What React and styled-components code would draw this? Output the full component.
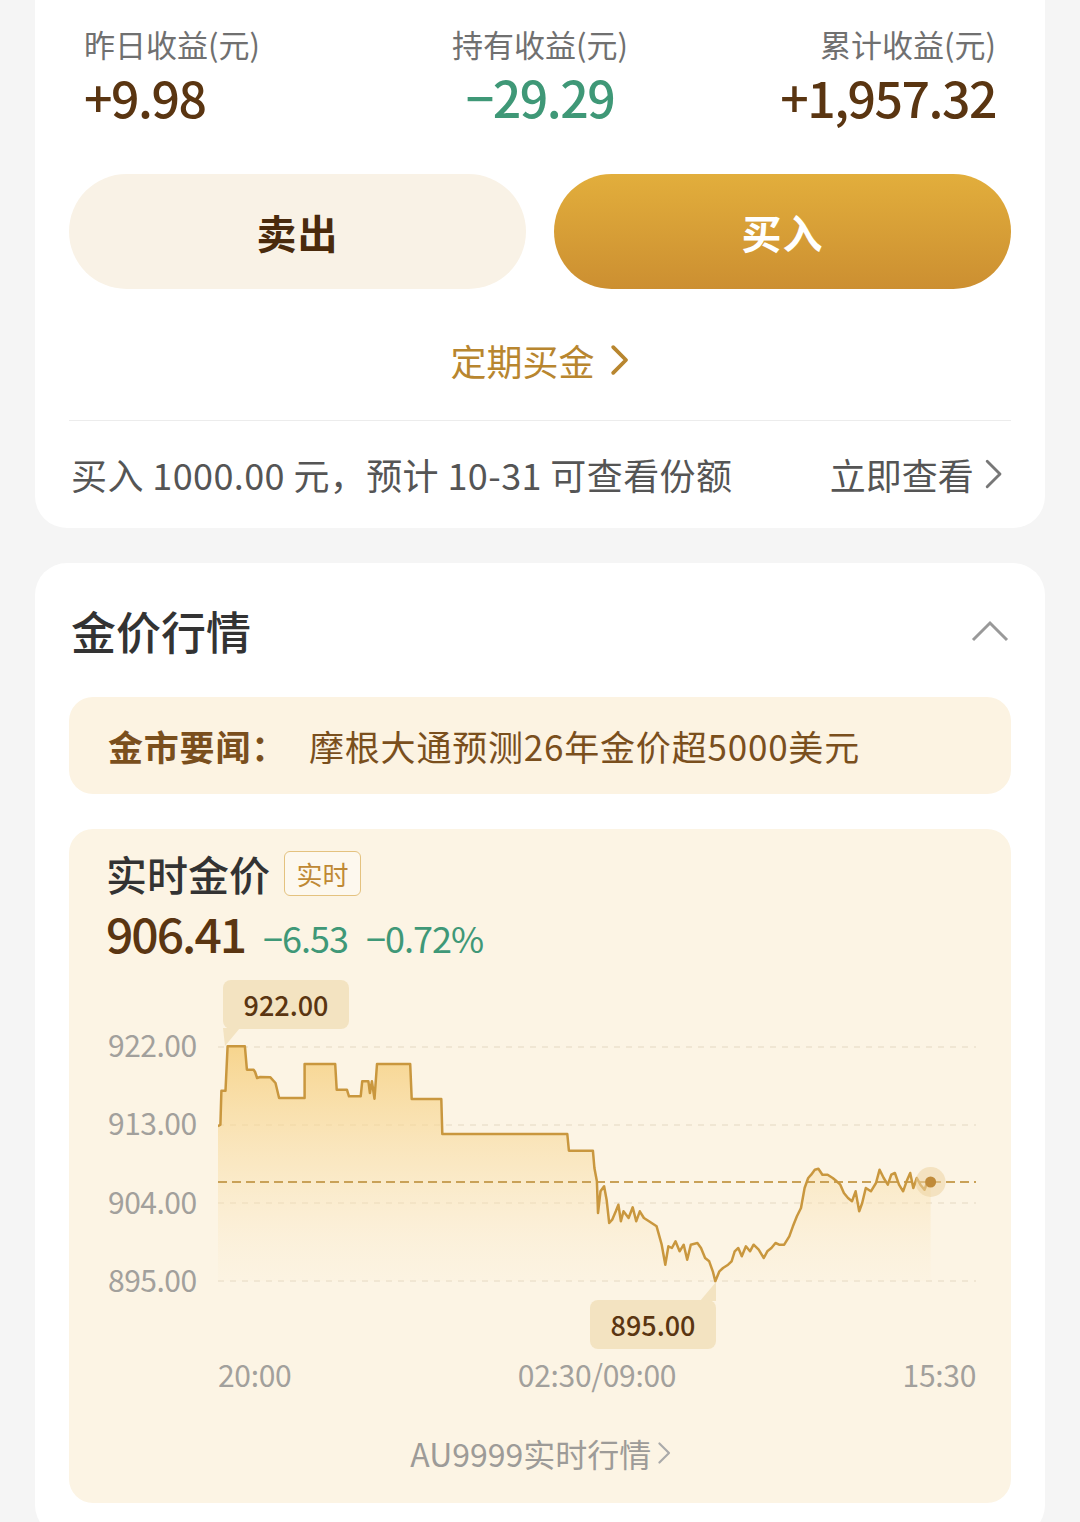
import React from "react";
import styled, { createGlobalStyle } from "styled-components";

const Global = createGlobalStyle`
  html, body { margin: 0; padding: 0; background: #f5f5f5; }
  body { font-family: "Noto Sans CJK SC", "Noto Sans", sans-serif; -webkit-font-smoothing: antialiased; }
  * { box-sizing: border-box; }
`;

const Page = styled.div`
  padding: 0 35px;
  display: flex;
  flex-direction: column;
  gap: 35px;
`;

const Card = styled.div`
  background: #fff;
  border-radius: ${(p) => (p.$top ? "0 0 32px 32px" : "32px")};
  padding: ${(p) => p.$pad};
`;

const Stats = styled.div`
  display: grid;
  grid-template-columns: 1fr 1fr 1fr;
  padding: 0 15px;
`;

const Stat = styled.div`
  display: flex;
  flex-direction: column;
  align-items: ${(p) => p.$align};
  gap: 0;
`;

const StatLabel = styled.div`
  font-size: 31px;
  line-height: 44px;
  color: #707070;
`;

const StatValue = styled.div`
  font-size: 50px;
  line-height: 60px;
  font-weight: 500;
  letter-spacing: -1.5px;
  color: ${(p) => (p.$green ? "#3f9877" : "#5a3511")};
`;

const Buttons = styled.div`
  display: grid;
  grid-template-columns: 1fr 1fr;
  gap: 28px;
  margin-top: 48px;
`;

const Btn = styled.button`
  height: 115px;
  border: none;
  border-radius: 58px;
  font-family: inherit;
  font-size: 40px;
  font-weight: 700;
  letter-spacing: 1px;
  color: ${(p) => (p.$primary ? "#fff" : "#4a2a0c")};
  background: ${(p) =>
    p.$primary ? "linear-gradient(180deg, #e2ae3c 0%, #cc8f31 100%)" : "#f9f2e6"};
`;

const CenterLink = styled.div`
  margin-top: 46px;
  display: flex;
  justify-content: center;
  align-items: center;
  gap: 16px;
  font-size: 36px;
  line-height: 50px;
  color: #b8862f;
`;

const Divider = styled.div`
  height: 1px;
  background: #ececec;
  margin-top: 35px;
`;

const InfoRow = styled.div`
  margin-top: 28px;
  display: flex;
  justify-content: space-between;
  align-items: center;
  padding: 0 2px;
  font-size: 36px;
  line-height: 50px;
  color: #555;
`;

const InfoText = styled.span`
  letter-spacing: 0.4px;
`;

const InfoLink = styled.div`
  display: flex;
  align-items: center;
  gap: 10px;
  color: #555;
  font-size: 36px;
  padding-right: 6px;
`;

const Header = styled.div`
  display: flex;
  justify-content: space-between;
  align-items: center;
  padding: 0 2px;
`;

const Title = styled.div`
  font-size: 45px;
  line-height: 60px;
  color: #333;
  font-weight: 500;
`;

const News = styled.div`
  margin-top: 36px;
  height: 97px;
  border-radius: 24px;
  background: #fcf3e2;
  display: flex;
  align-items: center;
  padding: 0 39px;
  font-size: 35px;
  letter-spacing: 0.8px;
  color: #7a4f1d;
`;

const NewsTag = styled.span`
  font-weight: 700;
  margin-right: 22px;
`;

const ChartBox = styled.div`
  margin-top: 35px;
  border-radius: 24px;
  background: #fcf4e4;
  padding: 22px 35px 28px 37px;
  display: flex;
  flex-direction: column;
`;

const NameRow = styled.div`
  display: flex;
  align-items: center;
  gap: 14px;
  height: 45px;
`;

const Name = styled.div`
  font-size: 41px;
  color: #333;
  font-weight: 500;
  line-height: 45px;
`;

const Badge = styled.div`
  width: 77px;
  height: 45px;
  border: 1.5px solid #e4c27f;
  border-radius: 6px;
  background: #fdf8ee;
  color: #bf8935;
  font-size: 26px;
  display: flex;
  align-items: center;
  justify-content: center;
`;

const PriceRow = styled.div`
  margin-top: 6px;
  display: flex;
  align-items: baseline;
  gap: 18px;
  line-height: 60px;
`;

const Price = styled.div`
  font-size: 48px;
  font-weight: 500;
  letter-spacing: -2px;
  color: #5a3511;
`;

const Change = styled.div`
  font-size: 36px;
  font-weight: 400;
  letter-spacing: -1px;
  color: #3f9877;
`;

const ChartZone = styled.div`
  margin-top: 11px;
  display: flex;
  height: 375px;
`;

const YAxis = styled.div`
  width: 112px;
  padding-top: 27px;
  display: flex;
  flex-direction: column;
`;

const YLabel = styled.div`
  height: 78.3px;
  line-height: 78px;
  font-size: 30px;
  color: #a2a09c;
  letter-spacing: -0.5px;
  padding-left: 2px;
  display: flex;
  align-items: center;
`;

const Plot = styled.div`
  position: relative;
  flex: 1;
`;

const Tip = styled.div`
  position: absolute;
  left: ${(p) => p.$x}px;
  top: ${(p) => p.$y}px;
  width: 126px;
  height: 49px;
  border-radius: 8px;
  background: #f3e3c1;
  color: #5a3511;
  font-size: 27px;
  font-weight: 500;
  display: flex;
  align-items: center;
  justify-content: center;
`;

const XAxis = styled.div`
  margin-top: 1px;
  margin-left: 112px;
  display: flex;
  justify-content: space-between;
  font-size: 30px;
  line-height: 40px;
  color: #a2a09c;
  letter-spacing: -0.3px;
`;

const Footer = styled.div`
  margin-top: 37px;
  display: flex;
  justify-content: center;
  align-items: center;
  gap: 6px;
  font-size: 32px;
  line-height: 44px;
  color: #9d9b98;
`;

const Chevron = ({ size = 20, color = "#b8862f", w = 3 }) => (
  <svg width={size * 0.6} height={size} viewBox="0 0 12 20">
    <polyline points="2,2 10,10 2,18" fill="none" stroke={color} strokeWidth={w} strokeLinecap="round" strokeLinejoin="round" />
  </svg>
);

const ChevronUp = () => (
  <svg width="38" height="24" viewBox="0 0 38 24">
    <polyline points="2,21 19,4 36,21" fill="none" stroke="#999" strokeWidth="3" />
  </svg>
);

const raw = [
  [35, 445], [40, 440], [42, 338], [50, 338], [54, 205], [88, 205], [92, 275], [105, 275], [108, 282],
  [112, 300], [118, 297], [138, 298], [148, 315], [155, 360], [205, 360], [205, 258], [265, 258],
  [268, 335], [288, 335], [292, 355], [315, 355], [318, 310], [330, 310], [333, 345], [337, 310],
  [342, 362], [347, 258], [412, 258], [415, 363], [473, 363], [475, 468], [720, 468], [723, 518],
  [770, 518], [773, 570], [778, 610], [780, 705], [785, 640], [792, 625], [797, 665], [802, 735],
  [808, 725], [815, 700], [820, 680], [825, 730], [830, 700], [840, 720], [848, 688], [855, 730],
  [862, 700], [870, 720], [880, 730], [895, 745], [905, 800], [912, 860], [918, 805], [925, 810],
  [932, 790], [940, 820], [948, 800], [955, 845], [962, 800], [975, 795], [982, 810], [990, 840],
  [998, 850], [1005, 880], [1010, 910], [1018, 880], [1025, 870], [1035, 860], [1042, 850],
  [1048, 820], [1055, 810], [1062, 835], [1070, 805], [1078, 820], [1085, 800], [1095, 815],
  [1105, 840], [1112, 820], [1120, 810], [1128, 795], [1135, 800], [1145, 800], [1155, 775],
  [1162, 745], [1170, 715], [1178, 690], [1185, 630], [1192, 600], [1198, 590], [1205, 575],
  [1212, 572], [1220, 590], [1230, 590], [1240, 600], [1248, 610], [1255, 620], [1262, 645],
  [1270, 660], [1278, 670], [1285, 640], [1292, 700], [1298, 675], [1305, 630], [1315, 640],
  [1325, 615], [1332, 575], [1340, 600], [1348, 620], [1355, 590], [1362, 585], [1370, 620],
  [1378, 640], [1385, 610], [1392, 585], [1398, 630], [1405, 600], [1412, 620], [1420, 635],
  [1425, 615], [1432, 612],
];
const pts = raw.map(([zx, zy]) => [200 + zx / 1.96, 980 + zy / 3]);
const linePath = pts.map(([x, y], i) => `${i ? "L" : "M"}${x.toFixed(1)},${y.toFixed(1)}`).join(" ");
const last = pts[pts.length - 1];
const areaPath = `${linePath} L${last[0].toFixed(1)},1283 L${pts[0][0].toFixed(1)},1283 Z`;

const Chart = () => (
  <svg width="758" height="375" viewBox="218 980 758 375" style={{ display: "block" }}>
    <defs>
      <linearGradient id="area" x1="0" y1="1048" x2="0" y2="1283" gradientUnits="userSpaceOnUse">
        <stop offset="0" stopColor="#f6cf7e" stopOpacity="0.85" />
        <stop offset="0.55" stopColor="#f8dca2" stopOpacity="0.45" />
        <stop offset="1" stopColor="#fbeacb" stopOpacity="0.1" />
      </linearGradient>
    </defs>
    {[1049, 1127, 1205, 1283].map((y) => (
      <line key={y} x1="218" x2="976" y1={y} y2={y} stroke="#f0e6d3" strokeWidth="2" strokeDasharray="6 6" />
    ))}
    <path d={areaPath} fill="url(#area)" />
    <line x1="218" x2="976" y1="1184" y2="1184" stroke="#c9a157" strokeWidth="2" strokeDasharray="9 5" />
    <path d={linePath} fill="none" stroke="#c9973e" strokeWidth="2.5" strokeLinejoin="round" />
    <circle cx={last[0]} cy={last[1]} r="15" fill="#ecd3a3" fillOpacity="0.55" />
    <circle cx={last[0]} cy={last[1]} r="5.5" fill="#c08b3a" />
    <polygon points="223,1030 240,1030 225,1048" fill="#f3e3c1" />
    <polygon points="700,1303 716,1303 716,1284" fill="#f3e3c1" />
  </svg>
);

export default function App() {
  return (
    <>
      <Global />
      <Page>
        <Card $top $pad="22px 34px 29px 34px">
          <Stats>
            <Stat $align="flex-start">
              <StatLabel>昨日收益(元)</StatLabel>
              <StatValue>+9.98</StatValue>
            </Stat>
            <Stat $align="center">
              <StatLabel>持有收益(元)</StatLabel>
              <StatValue $green>−29.29</StatValue>
            </Stat>
            <Stat $align="flex-end">
              <StatLabel>累计收益(元)</StatLabel>
              <StatValue>+1,957.32</StatValue>
            </Stat>
          </Stats>
          <Buttons>
            <Btn>卖出</Btn>
            <Btn $primary>买入</Btn>
          </Buttons>
          <CenterLink>
            定期买金
            <Chevron size={32} color="#b8862f" w={2.4} />
          </CenterLink>
          <Divider />
          <InfoRow>
            <InfoText>买入 1000.00 元，预计 10-31 可查看份额</InfoText>
            <InfoLink>
              立即查看
              <Chevron size={32} color="#777" w={1.8} />
            </InfoLink>
          </InfoRow>
        </Card>
        <Card $pad="38px 34px 34px 34px">
          <Header>
            <Title>金价行情</Title>
            <ChevronUp />
          </Header>
          <News>
            <NewsTag>金市要闻：</NewsTag>
            摩根大通预测26年金价超5000美元
          </News>
          <ChartBox>
            <NameRow>
              <Name>实时金价</Name>
              <Badge>实时</Badge>
            </NameRow>
            <PriceRow>
              <Price>906.41</Price>
              <Change>−6.53</Change>
              <Change>−0.72%</Change>
            </PriceRow>
            <ChartZone>
              <YAxis>
                <YLabel>922.00</YLabel>
                <YLabel>913.00</YLabel>
                <YLabel>904.00</YLabel>
                <YLabel>895.00</YLabel>
              </YAxis>
              <Plot>
                <Chart />
                <Tip $x={5} $y={2}>922.00</Tip>
                <Tip $x={372} $y={322}>895.00</Tip>
              </Plot>
            </ChartZone>
            <XAxis>
              <span>20:00</span>
              <span>02:30/09:00</span>
              <span>15:30</span>
            </XAxis>
            <Footer>
              AU9999实时行情
              <Chevron size={24} color="#aaa" w={1.8} />
            </Footer>
          </ChartBox>
        </Card>
      </Page>
    </>
  );
}
